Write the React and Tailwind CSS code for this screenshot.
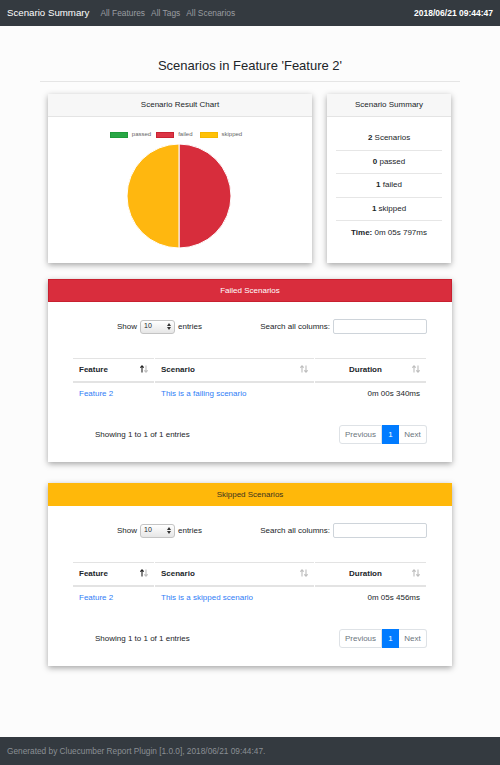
import React from 'react';

const font = { fontFamily: '"Liberation Sans", Arial, sans-serif' };

const SortIcon = ({ active }) => (
    <svg width="8" height="8" viewBox="0 0 8 8" className="mb-[2px]">
        <path d="M2 7.5 V1 M0.3 2.7 L2 0.8 L3.7 2.7" fill="none" stroke={active ? '#222' : '#bdbdbd'} strokeWidth="1.1" />
        <path d="M6 0.5 V7 M4.3 5.3 L6 7.2 L7.7 5.3" fill="none" stroke="#bdbdbd" strokeWidth="1.1" />
    </svg>
);

const ResultTable = ({ title, headerClass, scenario, duration }) => (
    <div className="bg-white shadow-[0_2px_6px_rgba(0,0,0,0.35)]">
        <div className={`h-[23px] flex items-center justify-center text-[8px] ${headerClass}`}>{title}</div>
        <div className="px-[25px] pt-[17px] pb-[18px]">
            {/* ─── Length + filter ─── */}
            <div className="flex h-[15px] items-center">
                <div className="flex-1 flex items-center justify-center gap-[3px] text-[8px] text-[#212529] pr-[8px]">
                    <span>Show</span>
                    <div className="w-[35px] h-[14px] rounded-[3px] border border-[#c4c4c4] bg-gradient-to-b from-white to-[#e6e6e6] flex items-center justify-between px-[3px]">
                        <span className="text-[7px]">10</span>
                        <svg width="4" height="7" viewBox="0 0 4 7">
                            <path d="M0 3 L2 0 L4 3 Z M0 4 L2 7 L4 4 Z" fill="#333" />
                        </svg>
                    </div>
                    <span>entries</span>
                </div>
                <div className="flex-1 flex items-center justify-end gap-[3px] text-[8px] text-[#212529]">
                    <span>Search all columns:</span>
                    <div className="w-[94px] h-[15px] border border-[#ced4da] rounded-[2px] bg-white"></div>
                </div>
            </div>

            {/* ─── Table ─── */}
            <div className="mt-[24px] grid grid-cols-[81px_159px_111px] gap-x-[1px] text-[8px]">
                <div className="h-[25px] border-t border-[#e3e3e3] border-b-2 border-b-[#e3e3e3] flex items-center justify-between pl-[6px] pr-[6px] font-bold text-[#212529]">
                    <span>Feature</span>
                    <SortIcon active />
                </div>
                <div className="h-[25px] border-t border-[#e3e3e3] border-b-2 border-b-[#e3e3e3] flex items-center justify-between pl-[6px] pr-[6px] font-bold text-[#212529]">
                    <span>Scenario</span>
                    <SortIcon />
                </div>
                <div className="h-[25px] border-t border-[#e3e3e3] border-b-2 border-b-[#e3e3e3] flex items-center justify-between pl-[34px] pr-[6px] font-bold text-[#212529]">
                    <span>Duration</span>
                    <SortIcon />
                </div>
                <div className="h-[22px] flex items-center pl-[6px] text-[#2f7df6]">Feature 2</div>
                <div className="h-[22px] flex items-center pl-[6px] text-[#2f7df6]">{scenario}</div>
                <div className="h-[22px] flex items-center justify-end pr-[6px] text-[#212529]">{duration}</div>
            </div>

            {/* ─── Info + pagination ─── */}
            <div className="mt-[20px] flex items-center justify-between h-[19px]">
                <span className="pl-[22px] text-[8px] text-[#212529]">Showing 1 to 1 of 1 entries</span>
                <div className="flex h-[19px] text-[8px]">
                    <div className="w-[43px] border border-[#dee2e6] rounded-l-[3px] flex items-center justify-center text-[#6c757d]">Previous</div>
                    <div className="w-[17px] bg-[#007bff] flex items-center justify-center text-white">1</div>
                    <div className="w-[28px] border border-[#dee2e6] border-l-0 rounded-r-[3px] flex items-center justify-center text-[#6c757d]">Next</div>
                </div>
            </div>
        </div>
    </div>
);

const App = () => {
    const summary = [
        { bold: '2', text: ' Scenarios' },
        { bold: '0', text: ' passed' },
        { bold: '1', text: ' failed' },
        { bold: '1', text: ' skipped' },
        { bold: 'Time:', text: ' 0m 05s 797ms' },
    ];

    return (
        <div className="min-h-screen flex flex-col bg-[#fcfcfc]" style={font}>
            {/* ─── Navbar ─── */}
            <div className="h-[26px] bg-[#343a40] flex items-center px-[7px]">
                <span className="text-white text-[9.7px] mr-[11px]">Scenario Summary</span>
                <div className="flex gap-[6px] text-[8.4px] text-[#9a9da1]">
                    <span>All Features</span>
                    <span>All Tags</span>
                    <span>All Scenarios</span>
                </div>
                <span className="ml-auto text-white font-bold text-[8.5px]">2018/06/21 09:44:47</span>
            </div>

            <div className="w-[420px] mx-auto pt-[31px] pb-[20px]">
                <h3 className="h-[18px] leading-[18px] text-center text-[13px] text-[#212529]">Scenarios in Feature 'Feature 2'</h3>
                <hr className="mt-[6px] border-[#e5e5e5]" />

                <div className="px-[8px] mt-[12px]">
                    {/* ─── Chart + summary ─── */}
                    <div className="flex gap-[15px]">
                        <div className="w-[264px] h-[169px] bg-white shadow-[0_2px_6px_rgba(0,0,0,0.35)]">
                            <div className="h-[23px] bg-[#f7f7f7] border-b border-[#e4e4e4] flex items-center justify-center text-[8px] text-[#212529]">Scenario Result Chart</div>
                            <div className="flex flex-col items-center pt-[13px]">
                                <div className="flex items-center gap-[4px] text-[6px] text-[#666] mr-[8px]">
                                    <span className="w-[18px] h-[6px] bg-[#28a745] border border-[#1e9a3a]"></span>
                                    <span className="mr-[1px]">passed</span>
                                    <span className="w-[18px] h-[6px] bg-[#dc3545] border border-[#c82333]"></span>
                                    <span className="mr-[3px]">failed</span>
                                    <span className="w-[18px] h-[6px] bg-[#ffc107] border border-[#f5b800]"></span>
                                    <span>skipped</span>
                                </div>
                                <svg width="106" height="106" viewBox="0 0 106 106" className="mt-[4px] mr-[3px]">
                                    <path d="M53 1 A52 52 0 0 1 53 105 Z" fill="#d72d3c" stroke="#fff" strokeWidth="1" />
                                    <path d="M53 105 A52 52 0 0 1 53 1 Z" fill="#ffb70f" stroke="#fff" strokeWidth="1" />
                                </svg>
                            </div>
                        </div>
                        <div className="w-[124px] h-[169px] bg-white shadow-[0_2px_6px_rgba(0,0,0,0.35)]">
                            <div className="h-[23px] bg-[#f7f7f7] border-b border-[#e4e4e4] flex items-center justify-center text-[8px] text-[#212529]">Scenario Summary</div>
                            <div className="px-[9px] pt-[10px]">
                                {summary.map((row, i) => (
                                    <div
                                        key={i}
                                        className={`h-[23.5px] flex items-center justify-center text-[8px] text-[#212529] ${i < summary.length - 1 ? 'border-b border-[#e6e6e6]' : ''}`}
                                    >
                                        <span className="font-bold">{row.bold}</span>
                                        <span className="whitespace-pre">{row.text}</span>
                                    </div>
                                ))}
                            </div>
                        </div>
                    </div>

                    <div className="mt-[16px]">
                        <ResultTable
                            title="Failed Scenarios"
                            headerClass="bg-[#d92d3d] border border-[#c8202f] text-white"
                            scenario="This is a failing scenario"
                            duration="0m 00s 340ms"
                        />
                    </div>

                    <div className="mt-[21px]">
                        <ResultTable
                            title="Skipped Scenarios"
                            headerClass="bg-[#ffb80a] text-[#3a3320]"
                            scenario="This is a skipped scenario"
                            duration="0m 05s 456ms"
                        />
                    </div>
                </div>
            </div>

            {/* ─── Footer ─── */}
            <div className="mt-auto h-[28px] bg-[#343a40] flex items-center px-[7px] text-[8.3px] text-[#8a8f94]">
                Generated by Cluecumber Report Plugin [1.0.0], 2018/06/21 09:44:47.
            </div>
        </div>
    );
};

export default App;
